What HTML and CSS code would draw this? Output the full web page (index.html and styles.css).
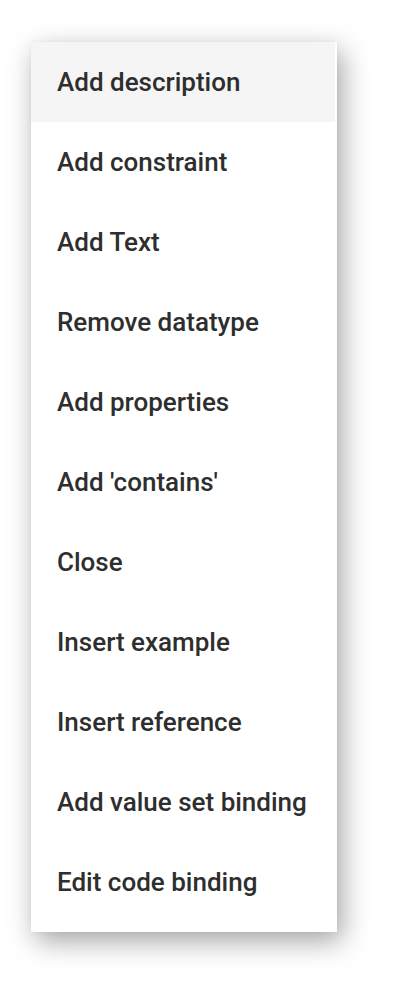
FILE: index.html
```html
<!DOCTYPE html>
<html>

<head>
    <title>Menu</title>
    <meta name="viewport" content="width=device-width, initial-scale=1.0">
    <link rel="stylesheet" href="styles.css">
</head>

<body>
    <ul class="menu">
        <li class="menuitem active">Add description</li>
        <li class="menuitem">Add constraint</li>
        <li class="menuitem">Add Text</li>
        <li class="menuitem">Remove datatype</li>
        <li class="menuitem">Add properties</li>
        <li class="menuitem">Add 'contains'</li>
        <li class="menuitem">Close</li>
        <li class="menuitem">Insert example</li>
        <li class="menuitem">Insert reference</li>
        <li class="menuitem">Add value set binding</li>
        <li class="menuitem">Edit code binding</li>
    </ul>
</body>

</html>
```
FILE: styles.css
```css
* {
    font-family: Roboto, "Liberation Sans", sans-serif;
}

body {
    margin: 0;
    padding: 42px 0 60px 31px;
    background-color: white;
}

.menu {
    list-style: none;
    margin: 0;
    padding: 0 0 10px 0;
    width: 306px;
    background-color: white;
    box-shadow: 5px 9px 26px rgba(0, 0, 0, 0.36), 0 0 5px rgba(0, 0, 0, 0.04);
}

.menuitem {
    height: 80px;
    display: flex;
    align-items: center;
    padding-left: 26px;
    margin-right: 2px;
    font-size: 26px;
    font-weight: 500;
    color: #2e2e2e;
}

.active {
    background-color: #f5f5f5;
}
```
